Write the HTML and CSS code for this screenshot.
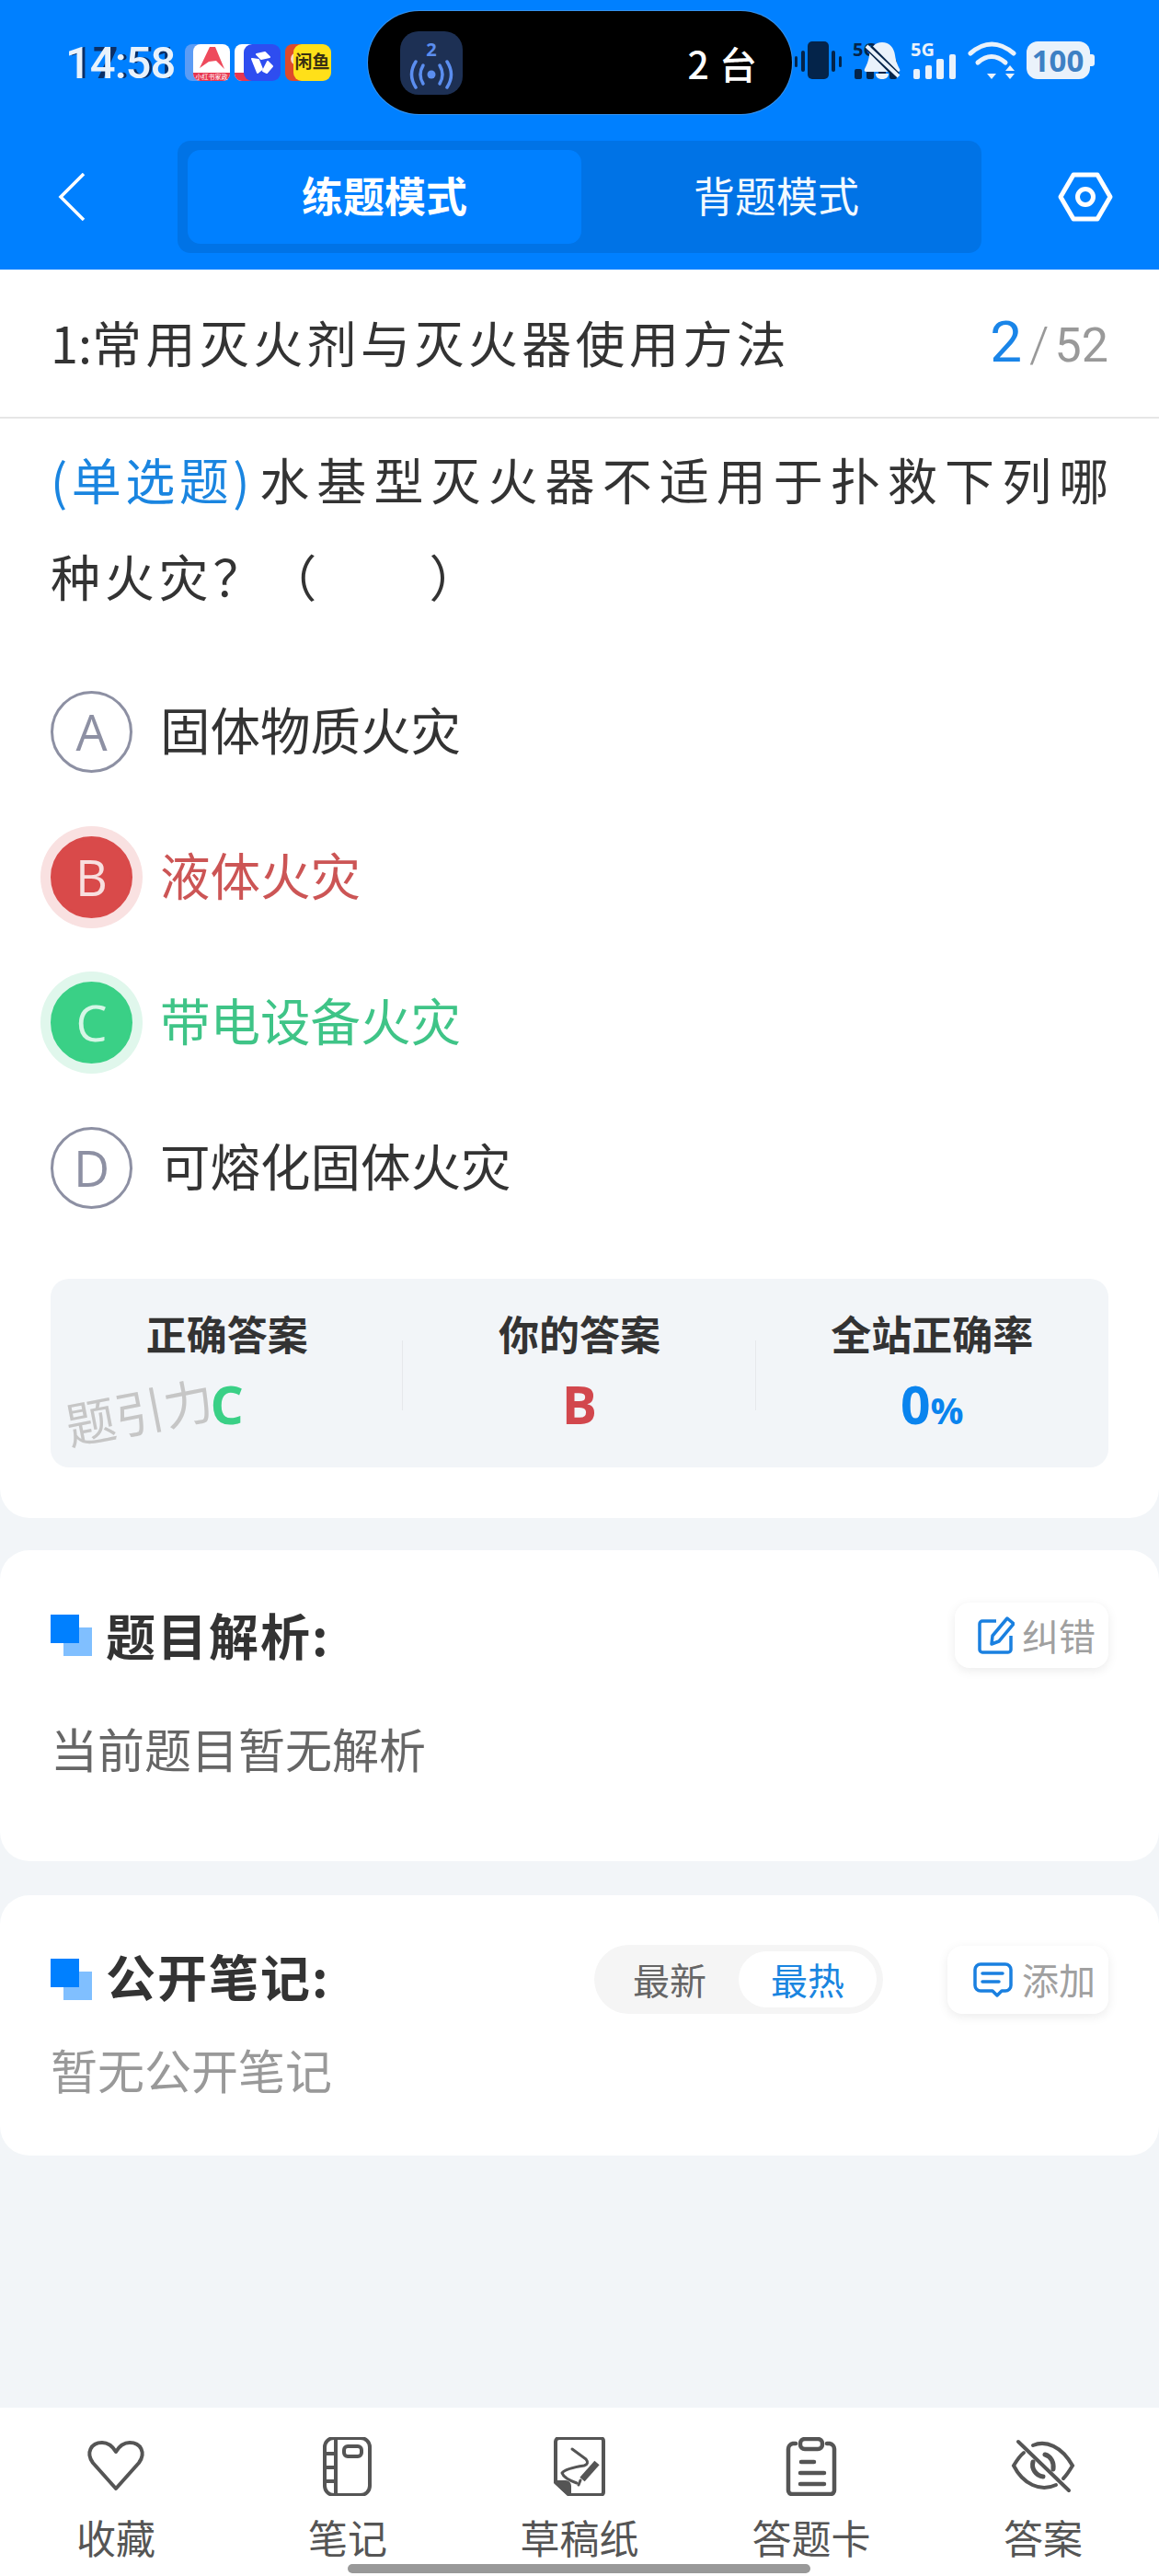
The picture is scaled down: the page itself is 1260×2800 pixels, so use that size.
FILE: index.html
```html
<!DOCTYPE html>
<html lang="zh-CN">
<head>
    <meta charset="UTF-8">
    <meta name="viewport" content="width=device-width, initial-scale=1.0">
    <title>练题模式</title>
    <link rel="stylesheet" href="styles.css">
</head>
<body>

<div class="page">

    <header class="top">
        <div class="status">
            <div class="time"><span class="time-ghost">17:51</span><span class="time-now">14:58</span></div>
            <svg class="notif" width="159" height="40" viewBox="0 0 159 40">
                <rect x="0" y="0" width="30" height="40" rx="8" fill="#5b9cf5"/>
                <rect x="9" y="0" width="40" height="40" rx="8" fill="#fff"/>
                <path d="M9 31h40v1a8 8 0 0 1-8 8H17a8 8 0 0 1-8-8z" fill="#e8364f"/>
                <path d="M16 26 L27 3 L33 3 L43 27 L34 18 L26 19 Z" fill="#ee4a5c"/>
                <text class="notif-tiny" x="29" y="38" text-anchor="middle">小红书家政</text>
                <rect x="54" y="0" width="30" height="40" rx="8" fill="#fff"/>
                <path d="M54 31h30v9H62a8 8 0 0 1-8-8z" fill="#e8364f"/>
                <rect x="64" y="0" width="40" height="40" rx="9" fill="#2e4df0"/>
                <g fill="#fff" stroke="#fff" stroke-width="2" stroke-linejoin="round">
                    <path d="M78 11 L87 9 L92 14 L83 16 Z"/>
                    <path d="M73 16 L80 17 L84 27 L79 31 Z"/>
                    <path d="M90 19 L95 24 L89 31 L85 29 Z"/>
                </g>
                <rect x="109" y="0" width="30" height="40" rx="8" fill="#de4a2c"/>
                <circle cx="122" cy="16" r="7" fill="#f6d9c2"/>
                <rect x="118" y="0" width="41" height="40" rx="9" fill="#ffe019"/>
                <text class="notif-fish" x="138.5" y="26" text-anchor="middle">闲鱼</text>
            </svg>
            <div class="island">
                <div class="island-app">
                    <span class="island-num">2</span>
                    <svg width="50" height="32" viewBox="0 0 50 32" fill="none" stroke="#5b8ef0" stroke-width="3.5" stroke-linecap="round">
                        <circle cx="25" cy="16" r="4.5" fill="#5b8ef0" stroke="none"/>
                        <path d="M16 6 Q10 16 16 26"/>
                        <path d="M34 6 Q40 16 34 26"/>
                        <path d="M8 2 Q-1 16 8 30"/>
                        <path d="M42 2 Q51 16 42 30"/>
                    </svg>
                </div>
                <span class="island-text">2 台</span>
            </div>
            <svg class="sys" width="326" height="64" viewBox="0 -10 326 64">
                <g fill="#04244a">
                    <rect x="0" y="16" width="3" height="12" rx="1.5"/>
                    <rect x="7" y="10" width="4" height="23" rx="2"/>
                    <rect x="14" y="0" width="23" height="41" rx="5"/>
                    <rect x="40" y="10" width="4" height="23" rx="2"/>
                    <rect x="48" y="16" width="3" height="12" rx="1.5"/>
                    <text class="sys-5g" x="63" y="16">5G</text>
                    <rect x="65" y="30" width="8" height="11" rx="2"/>
                    <rect x="78" y="30" width="8" height="11" rx="2"/>
                    <rect x="91" y="30" width="8" height="11" rx="2"/>
                    <rect x="103" y="20" width="8" height="21" rx="2"/>
                </g>
                <path d="M95 1c8 0 13 6 14 14 1 7 3 11 5 15 1 2 0 3-2 3H78c-2 0-3-1-2-3 2-4 4-8 5-15 1-8 6-14 14-14z" fill="#eaf2fb"/>
                <path d="M88 35h14c0 4-3 6-7 6s-7-2-7-6z" fill="#eaf2fb"/>
                <path d="M81 7 L111 37" stroke="#04244a" stroke-width="8"/>
                <path d="M78 5 L113 38" stroke="#eaf2fb" stroke-width="4"/>
                <g fill="#eaf2fb">
                    <text class="sys-5g" x="126" y="16">5G</text>
                    <rect x="129" y="30" width="7" height="11" rx="2"/>
                    <rect x="142" y="26" width="7" height="15" rx="2"/>
                    <rect x="154" y="19" width="8" height="22" rx="2"/>
                    <rect x="168" y="14" width="7" height="27" rx="2"/>
                    <path d="M209 35 h10 l-5 6 z"/>
                    <path d="M229 32 l5-6 5 6z"/>
                    <path d="M229 35 h10 l-5 6z"/>
                    <rect x="252" y="0" width="69" height="41" rx="12"/>
                    <path d="M321 14h2a3 3 0 0 1 3 3v7a3 3 0 0 1-3 3h-2z"/>
                </g>
                <g fill="none" stroke="#eaf2fb" stroke-width="5" stroke-linecap="round">
                    <path d="M191 13 Q214 -7 238 13"/>
                    <path d="M199 23 Q214 10 229 23" />
                </g>
                <text class="sys-battery" x="286" y="33" text-anchor="middle">100</text>
            </svg>
        </div>

        <nav class="nav">
            <svg class="nav-back" width="30" height="52" viewBox="0 0 30 52" fill="none" stroke="#fff" stroke-width="3.5">
                <path d="M28 1 L3 26 L28 51"/>
            </svg>
            <div class="mode">
                <div class="mode-tab mode-on">练题模式</div>
                <div class="mode-tab">背题模式</div>
            </div>
            <svg class="nav-set" width="60" height="54" viewBox="0 0 60 54" fill="none" stroke="#fff" stroke-width="5">
                <path d="M17 3 H43 L57 27 L43 51 H17 L3 27 Z" stroke-linejoin="round"/>
                <circle cx="30" cy="27" r="8.5"/>
            </svg>
        </nav>
    </header>

    <div class="chapter">
        <div class="chapter-name"><span class="chapter-no">1:</span>常用灭火剂与灭火器使用方法</div>
        <div class="chapter-count"><span class="count-now">2</span><span class="count-sep">/</span><span class="count-all">52</span></div>
    </div>

    <section class="card card-question">
        <p class="question"><span class="question-tag">(单选题)</span>水基型灭火器不适用于扑救下列哪种火灾？（&#12288;&#12288;）</p>

        <div class="options">
            <div class="option">
                <span class="option-dot">A</span>
                <span class="option-text">固体物质火灾</span>
            </div>
            <div class="option option-wrong">
                <span class="option-dot">B</span>
                <span class="option-text">液体火灾</span>
            </div>
            <div class="option option-right">
                <span class="option-dot">C</span>
                <span class="option-text">带电设备火灾</span>
            </div>
            <div class="option">
                <span class="option-dot">D</span>
                <span class="option-text">可熔化固体火灾</span>
            </div>
        </div>

        <div class="stats">
            <div class="stat">
                <div class="stat-label">正确答案</div>
                <div class="stat-value green">C</div>
            </div>
            <div class="stat">
                <div class="stat-label">你的答案</div>
                <div class="stat-value red">B</div>
            </div>
            <div class="stat">
                <div class="stat-label">全站正确率</div>
                <div class="stat-value blue">0<small>%</small></div>
            </div>
            <div class="watermark">题引力</div>
        </div>
    </section>

    <section class="card card-analysis">
        <div class="card-head">
            <span class="mark"></span>
            <h3 class="card-title">题目解析:</h3>
            <div class="tool-btn tool-fix">
                <svg width="40" height="41" viewBox="0 0 40 41" fill="none" stroke="#1a80e0" stroke-width="3.5" stroke-linejoin="round">
                    <path d="M20 5 H5 a3 3 0 0 0 -3 3 V36 a3 3 0 0 0 3 3 H33 a3 3 0 0 0 3 -3 V21"/>
                    <path d="M32 2 L39 8 L23 27 L15 30 L16 21 Z"/>
                </svg>
                <span class="tool-text">纠错</span>
            </div>
        </div>
        <p class="analysis-text">当前题目暂无解析</p>
    </section>

    <section class="card card-notes">
        <div class="card-head">
            <span class="mark"></span>
            <h3 class="card-title">公开笔记:</h3>
            <div class="sort">
                <span class="sort-item">最新</span>
                <span class="sort-item sort-on">最热</span>
            </div>
            <div class="tool-btn tool-add">
                <svg width="43" height="38" viewBox="0 0 43 38" fill="none" stroke="#1a80e0" stroke-width="3.5" stroke-linecap="round" stroke-linejoin="round">
                    <path d="M8 2 H35 a6 6 0 0 1 6 6 V25 a6 6 0 0 1 -6 6 H31 L26 36 L21 31 H8 a6 6 0 0 1 -6 -6 V8 a6 6 0 0 1 6 -6 Z"/>
                    <path d="M10 12 H32"/>
                    <path d="M10 21 H28"/>
                </svg>
                <span class="tool-text">添加</span>
            </div>
        </div>
        <p class="notes-empty">暂无公开笔记</p>
    </section>

    <footer class="bottom">
        <div class="bottom-item">
            <svg width="70" height="64" viewBox="0 0 70 64" fill="none" stroke="#555" stroke-width="4" stroke-linejoin="round">
                <path d="M35 56 L10 28 C2 17 8 6 20 6 C27 6 32 11 35 16 C38 11 43 6 50 6 C62 6 68 17 60 28 Z"/>
            </svg>
            <span>收藏</span>
        </div>
        <div class="bottom-item">
            <svg width="70" height="64" viewBox="0 0 70 64" fill="none" stroke="#555" stroke-width="4">
                <rect x="10" y="1" width="49" height="62" rx="10"/>
                <path d="M22 1 V63"/>
                <path d="M10 18 H22 M10 33 H22 M10 48 H22"/>
                <rect x="31" y="10" width="19" height="11" rx="4"/>
            </svg>
            <span>笔记</span>
        </div>
        <div class="bottom-item">
            <svg width="70" height="64" viewBox="0 0 70 64" fill="none" stroke="#555" stroke-width="4" stroke-linejoin="round" stroke-linecap="round">
                <path d="M13 1 H58 a3 3 0 0 1 3 3 V60 a3 3 0 0 1 -3 3 H24 L9 49 V5 a4 4 0 0 1 4 -4 Z"/>
                <path d="M9 49 H20 a4 4 0 0 1 4 4 V63 Z" fill="#555"/>
                <path d="M27 13 L42 24 Q46 29 40 31 Q20 34 16 39 Q18 45 32 50" stroke-width="3"/>
                <path d="M54 28 L38 46" stroke-width="7" stroke-linecap="butt"/>
                <path d="M34 52 L36 47" stroke-width="3"/>
            </svg>
            <span>草稿纸</span>
        </div>
        <div class="bottom-item">
            <svg width="70" height="64" viewBox="0 0 70 64" fill="none" stroke="#555" stroke-width="4.5" stroke-linecap="round">
                <path d="M18 7 H15 a6 6 0 0 0 -5 6 V58 a4 4 0 0 0 4 4 H56 a4 4 0 0 0 4 -4 V13 a6 6 0 0 0 -5 -6 H52"/>
                <rect x="23" y="2" width="24" height="11" rx="5"/>
                <path d="M24 27 H38 M23 39 H49 M23 51 H49"/>
            </svg>
            <span>答题卡</span>
        </div>
        <div class="bottom-item">
            <svg width="70" height="64" viewBox="0 0 70 64" fill="none" stroke="#555" stroke-width="4" stroke-linecap="round">
                <path d="M8 5 L63 58"/>
                <path d="M24 9 C38 3 55 10 67 31 C64 36 61 41 57 45"/>
                <path d="M14 17 C9 21 6 26 3 31 C13 51 32 60 49 52"/>
                <path d="M37 19 C44 21 47 28 46 35" stroke-width="5"/>
                <path d="M24 27 C22 34 27 42 35 43" stroke-width="5"/>
            </svg>
            <span>答案</span>
        </div>
    </footer>

    <div class="home-bar"></div>
</div>

</body>
</html>
```

FILE: styles.css
```css
* {
    box-sizing: border-box;
}
body {
    margin: 0;
    font-family: "Noto Sans CJK SC", "Noto Sans", sans-serif;
    color: #333;
}
h3, p {
    margin: 0;
}
.page {
    position: relative;
    display: flex;
    flex-direction: column;
    width: 1260px;
    height: 2800px;
    overflow: hidden;
    background-color: #f2f5f8;
}

/* blue header */
.top {
    height: 293px;
    padding-top: 12px;
    background-color: #0080ff;
}
.status {
    display: flex;
    align-items: center;
    height: 112px;
    padding-left: 71px;
}
.time {
    position: relative;
    width: 118px;
    padding-top: 2px;
    font-family: Roboto, sans-serif;
    font-size: 49px;
    font-weight: 500;
    letter-spacing: -1px;
    line-height: 56px;
}
.time-now {
    position: relative;
    color: #e8f2fc;
}
.time-ghost {
    position: absolute;
    left: 3px;
    top: 2px;
    color: #0b2f66;
}
.notif {
    margin-left: 12px;
    margin-top: -1px;
}
.notif-tiny {
    font-size: 7px;
    fill: #fff;
}
.notif-fish {
    font-size: 19px;
    font-weight: 700;
    fill: #3a3012;
}
.island {
    display: flex;
    align-items: center;
    justify-content: space-between;
    width: 461px;
    height: 112px;
    margin-left: 40px;
    padding: 0 37px 0 35px;
    background-color: #000;
    border-radius: 56px;
    box-shadow: 0 0 0 1px rgba(120, 170, 220, 0.45);
}
.island-app {
    display: flex;
    flex-direction: column;
    align-items: center;
    width: 68px;
    height: 69px;
    padding-top: 9px;
    background-color: #1d3054;
    border-radius: 20px;
}
.island-num {
    height: 22px;
    font-family: "Noto Sans", sans-serif;
    font-size: 20px;
    font-weight: 700;
    line-height: 22px;
    color: #5b8ef0;
}
.island-text {
    font-size: 41px;
    font-weight: 500;
    letter-spacing: 1px;
    color: #fff;
}
.sys {
    margin-left: 3px;
    margin-top: -2px;
}
.sys-5g {
    font-family: "Open Sans", sans-serif;
    font-size: 20px;
    font-weight: 700;
}
.sys-battery {
    font-family: "Open Sans", sans-serif;
    font-size: 33px;
    font-weight: 700;
    fill: #3d80c4;
}
.nav {
    display: flex;
    align-items: center;
    height: 122px;
    margin-top: 29px;
    padding-left: 63px;
}
.nav-set {
    margin-left: 83px;
}
.mode {
    display: flex;
    align-items: center;
    width: 874px;
    height: 122px;
    margin-left: 100px;
    padding: 0 11px;
    background-color: #0073e6;
    border-radius: 14px;
}
.mode-tab {
    width: 424px;
    height: 102px;
    font-size: 45px;
    line-height: 98px;
    text-align: center;
    color: #f2f9ff;
}
.mode-on {
    width: 428px;
    font-weight: 700;
    color: #fff;
    background-color: #0080ff;
    border-radius: 14px;
}

/* chapter row */
.chapter {
    display: flex;
    align-items: center;
    justify-content: space-between;
    height: 162px;
    padding: 0 55px;
    background-color: #fff;
    border-bottom: 2px solid #e6e6e6;
}
.chapter-name {
    padding-bottom: 3px;
    font-size: 54px;
    letter-spacing: 4.4px;
    line-height: 80px;
}
.chapter-no {
    letter-spacing: 0;
}
.chapter-count {
    display: flex;
    align-items: baseline;
    padding-bottom: 3px;
    font-family: Roboto, sans-serif;
    color: #999;
}
.count-now {
    font-size: 62px;
    color: #1a85e8;
}
.count-sep {
    margin: 0 6px 0 8px;
    font-size: 54px;
    font-weight: 300;
}
.count-all {
    font-size: 52px;
}

/* white cards */
.card {
    padding-left: 55px;
    padding-right: 55px;
    background-color: #fff;
    border-radius: 32px;
}
.card-question {
    padding-top: 13px;
    padding-bottom: 55px;
    border-radius: 0 0 32px 32px;
}
.question {
    margin-right: -5px;
    font-size: 54px;
    line-height: 105px;
    letter-spacing: 4.8px;
    text-align: justify;
}
.question-tag {
    display: inline-block;
    margin-right: 3px;
    letter-spacing: 4.5px;
    color: #1a85e0;
}
.options {
    margin-top: 38px;
}
.option {
    display: flex;
    align-items: center;
    gap: 30px;
    height: 158px;
    font-size: 54.5px;
    line-height: 70px;
}
.option-text {
    padding-bottom: 6px;
}
.option-dot {
    flex: none;
    width: 89px;
    height: 89px;
    font-family: "Open Sans", sans-serif;
    font-size: 54px;
    line-height: 83px;
    text-align: center;
    color: #8d90a3;
    border: 3px solid #8d90a3;
    border-radius: 50%;
}
.option-wrong {
    color: #cc5555;
}
.option-wrong .option-dot {
    color: #f8dfdf;
    background-color: #d94a4a;
    border-color: #d94a4a;
    box-shadow: 0 0 0 11px #f9e1e1;
}
.option-right {
    color: #3fc487;
}
.option-right .option-dot {
    color: #d6f6e6;
    background-color: #3ad086;
    border-color: #3ad086;
    box-shadow: 0 0 0 11px #e0f7ec;
}
.stats {
    position: relative;
    display: grid;
    grid-template-columns: repeat(3, 1fr);
    height: 205px;
    margin-top: 42px;
    padding-top: 31px;
    background-color: #f2f5f8;
    border-radius: 20px;
}
.stat {
    position: relative;
    text-align: center;
}
.stat + .stat::before {
    content: "";
    position: absolute;
    left: -1px;
    top: 36px;
    height: 76px;
    border-left: 1px solid #e6e8eb;
}
.stat-label {
    font-size: 44px;
    font-weight: 700;
    line-height: 56px;
}
.stat-value {
    margin-top: 19px;
    font-family: "Open Sans", sans-serif;
    font-size: 57px;
    font-weight: 700;
    line-height: 60px;
}
.stat-value small {
    font-size: 40px;
}
.green {
    color: #3ad086;
}
.red {
    color: #d2474d;
}
.blue {
    color: #0a84ee;
}
.watermark {
    position: absolute;
    left: 15px;
    top: 112px;
    font-size: 54px;
    line-height: 62px;
    color: #c6c6c6;
    transform: rotate(-11deg);
}

.card-analysis {
    height: 338px;
    margin-top: 35px;
    padding-top: 57px;
}
.card-notes {
    height: 283px;
    margin-top: 37px;
    padding-top: 54px;
}
.card-head {
    display: flex;
    align-items: center;
}
.mark {
    position: relative;
    flex: none;
    width: 45px;
    height: 45px;
    margin-right: 15px;
}
.mark::before,
.mark::after {
    content: "";
    position: absolute;
    width: 31px;
    height: 31px;
}
.mark::before {
    right: 0;
    bottom: 0;
    background-color: #80bfff;
}
.mark::after {
    left: 0;
    top: 0;
    background-color: #0080ff;
}
.card-title {
    flex: 1;
    padding-bottom: 1px;
    font-size: 54px;
    font-weight: 700;
    letter-spacing: 2px;
    line-height: 64px;
}
.card-notes .card-title {
    padding-bottom: 7px;
}
.tool-btn {
    display: flex;
    align-items: center;
    justify-content: flex-end;
    padding-right: 14px;
    font-size: 40px;
    line-height: 50px;
    color: #a0a0a0;
    background-color: #fff;
    border-radius: 16px;
    box-shadow: 0 3px 12px rgba(0, 0, 0, 0.08);
}
.tool-text {
    padding-bottom: 2px;
}
.tool-fix {
    gap: 8px;
    width: 167px;
    height: 71px;
}
.tool-add {
    gap: 10px;
    width: 175px;
    height: 74px;
    margin-left: 70px;
}
.analysis-text {
    margin-top: 52px;
    font-size: 51px;
    line-height: 70px;
    color: #666;
}
.notes-empty {
    margin-top: 25px;
    font-size: 51px;
    line-height: 70px;
    color: #999;
}
.sort {
    display: flex;
    align-items: center;
    width: 314px;
    height: 75px;
    padding: 0 7px;
    background-color: #f5f5f5;
    border-radius: 38px;
}
.sort-item {
    flex: 1;
    font-size: 40px;
    line-height: 61px;
    text-align: center;
    color: #666;
}
.sort-on {
    flex: none;
    width: 150px;
    color: #1a85e0;
    background-color: #fff;
    border-radius: 31px;
}

/* bottom toolbar */
.bottom {
    display: flex;
    height: 183px;
    margin-top: auto;
    padding-top: 32px;
    background-color: #fff;
}
.bottom-item {
    display: flex;
    flex-direction: column;
    align-items: center;
    width: 252px;
    font-size: 43px;
    line-height: 56px;
    color: #555;
}
.bottom-item svg {
    margin-bottom: 16px;
}
.home-bar {
    position: absolute;
    left: 378px;
    bottom: 3px;
    width: 503px;
    height: 10px;
    background-color: #999;
    border-radius: 5px;
}
```
